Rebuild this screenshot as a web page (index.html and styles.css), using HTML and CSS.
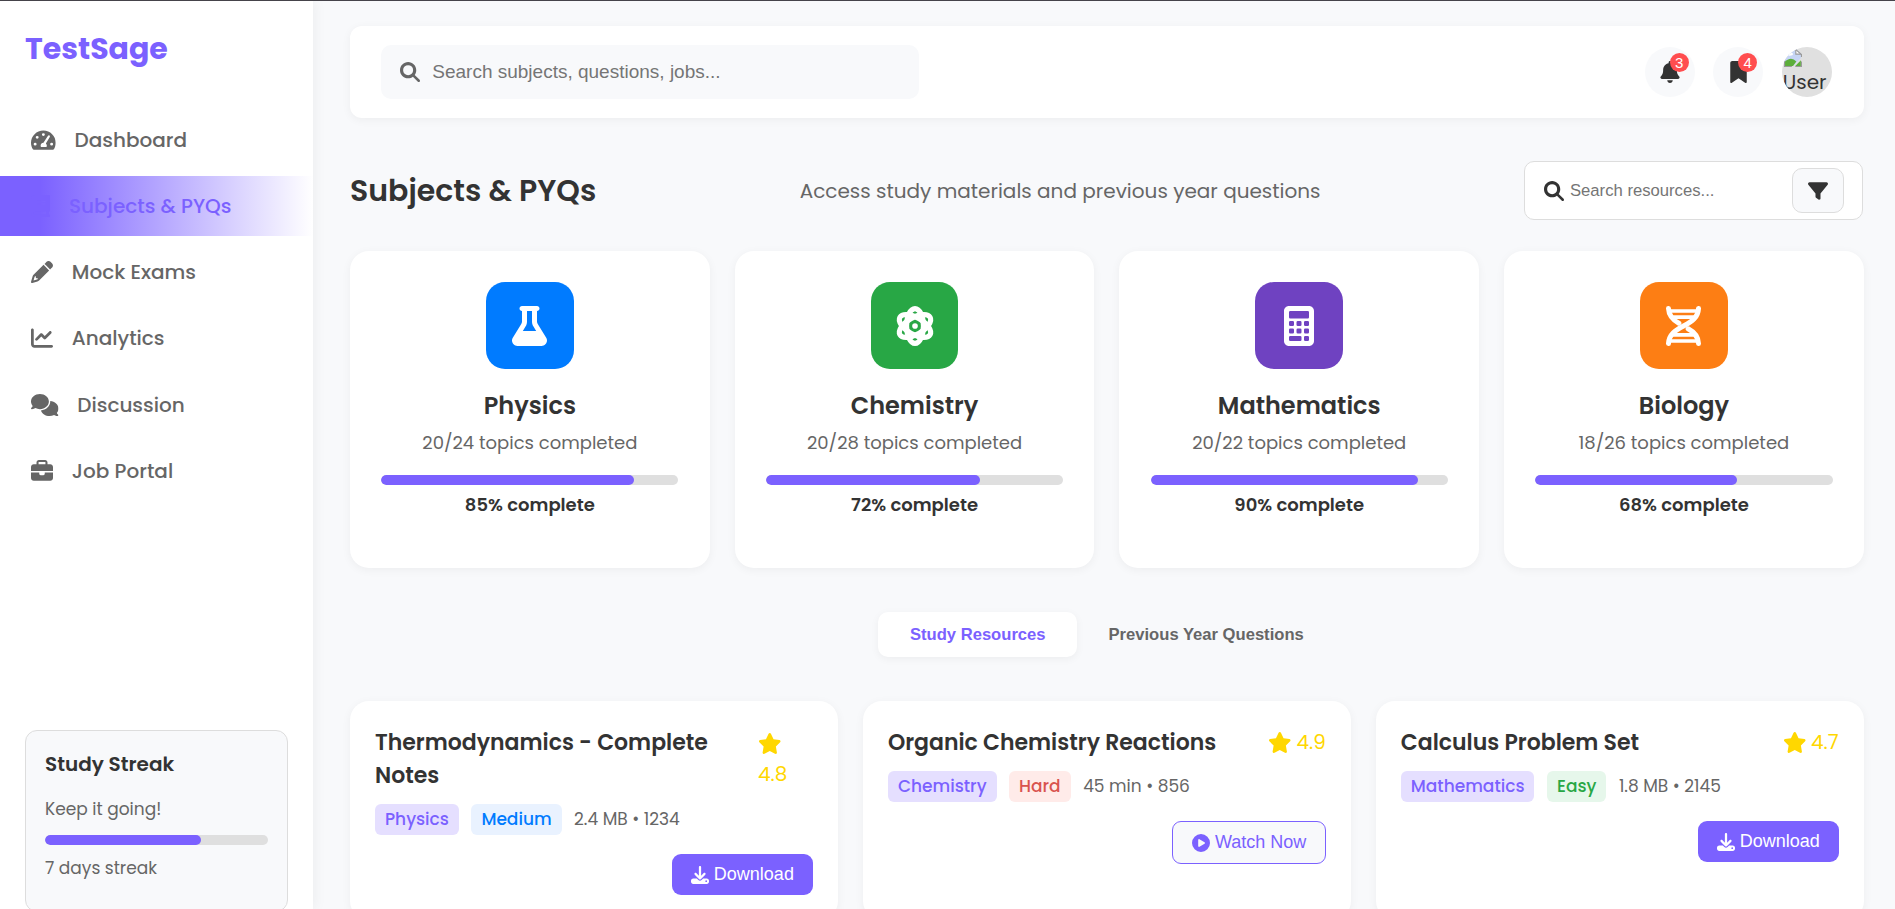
FILE: index.html
```html
<!DOCTYPE html>
<html lang="en">
<head>
<meta charset="utf-8">
<title>TestSage</title>
<link rel="stylesheet" href="styles.css">
</head>
<body>
<svg class="sprite" aria-hidden="true">
  <symbol id="i-search" viewBox="0 0 512 512"><path d="M416 208c0 45.9-14.9 88.3-40 122.7L502.6 457.4c12.5 12.5 12.5 32.8 0 45.3s-32.8 12.5-45.3 0L330.7 376c-34.4 25.2-76.8 40-122.7 40C93.1 416 0 322.9 0 208S93.1 0 208 0S416 93.1 416 208zM208 336a128 128 0 1 0 0-256 128 128 0 1 0 0 256z"/></symbol>
  <symbol id="i-gauge" viewBox="0 0 576 512"><path fill-rule="evenodd" d="M288 32C129 32 0 161 0 320c0 53 14 102 39 145 6 10 16 15 28 15H509c12 0 22-5 28-15 25-43 39-92 39-145C576 161 447 32 288 32zM288 96a34 34 0 1 1 0 68 34 34 0 1 1 0-68zM96 386a34 34 0 1 1 0-68 34 34 0 1 1 0 68zM144 160a34 34 0 1 1 0 68 34 34 0 1 1 0-68zM437 184L346 336c14 13 22 31 22 50 0 12-3 22-8 31H232c-5-9-8-20-8-31 0-36 29-65 66-66L396 159c7-11 22-15 33-8 12 7 15 22 8 33zM480 386a34 34 0 1 1 0-68 34 34 0 1 1 0 68z"/></symbol>
  <symbol id="i-book" viewBox="0 0 448 512"><path fill-rule="evenodd" d="M96 0C43 0 0 43 0 96V416c0 53 43 96 96 96H416c18 0 32-14 32-32s-14-32-32-32V384c18 0 32-14 32-32V32c0-18-14-32-32-32H96zm0 384H352v64H96c-18 0-32-14-32-32s14-32 32-32zM144 128H336v32H144zM144 192H336v32H144z"/></symbol>
  <symbol id="i-pencil" viewBox="0 0 512 512"><path d="M410.3 231l11.3-11.3-33.9-33.9-62.1-62.1L291.7 89.8l-11.3 11.3-22.6 22.6L58.6 322.9c-10.4 10.4-18 23.3-22.2 37.4L1 480.7c-2.5 8.4-.2 17.5 6.1 23.7s15.3 8.5 23.7 6.1l120.3-35.4c14.1-4.2 27-11.8 37.4-22.2L387.7 253.7 410.3 231zM160 399.4l-9.1 22.7c-4 3.1-8.5 5.4-13.3 6.9L59.4 452l23-78.1c1.4-4.9 3.8-9.4 6.9-13.3l22.7-9.1v32c0 8.8 7.2 16 16 16h32zM362.7 18.7L348.3 33.2 325.7 55.8 314.3 67.1l33.9 33.9 62.1 62.1 33.9 33.9 11.3-11.3 22.6-22.6 14.5-14.5c25-25 25-65.5 0-90.5L453.3 18.7c-25-25-65.5-25-90.5 0z"/></symbol>
  <symbol id="i-chart" viewBox="0 0 512 512"><path d="M64 64c0-17.7-14.3-32-32-32S0 46.3 0 64V400c0 44.2 35.8 80 80 80H480c17.7 0 32-14.3 32-32s-14.3-32-32-32H80c-8.8 0-16-7.2-16-16V64zm406.6 86.6c12.5-12.5 12.5-32.8 0-45.3s-32.8-12.5-45.3 0L320 210.7l-57.4-57.4c-12.5-12.5-32.8-12.5-45.3 0l-112 112c-12.5 12.5-12.5 32.8 0 45.3s32.8 12.5 45.3 0L240 221.3l57.4 57.4c12.5 12.5 32.8 12.5 45.3 0l128-128z"/></symbol>
  <symbol id="i-comments" viewBox="0 0 640 512"><path d="M208 352c114.9 0 208-78.8 208-176S322.9 0 208 0S0 78.8 0 176c0 38.6 14.7 74.3 39.6 103.4c-3.5 9.4-8.7 17.7-14.2 24.7c-4.8 6.2-9.7 11-13.3 14.3c-1.8 1.6-3.3 2.9-4.3 3.7c-.5 .4-.9 .7-1.1 .8l-.2 .2C1 327.2-1.4 334.4 .8 340.9S9.1 352 16 352c21.8 0 43.8-5.6 62.1-12.5c9.2-3.5 17.8-7.4 25.3-11.4C134.1 343.3 169.8 352 208 352zM448 176c0 112.3-99.1 196.9-216.5 207C255.8 457.4 336.4 512 432 512c38.2 0 73.9-8.7 104.7-23.9c7.5 4 16 7.9 25.2 11.4c18.3 6.9 40.3 12.5 62.1 12.5c6.9 0 13.1-4.5 15.2-11.1c2.1-6.6-.2-13.8-5.8-17.9l-.2-.2c-.2-.2-.6-.4-1.1-.8c-1-.8-2.5-2-4.3-3.7c-3.6-3.3-8.5-8.1-13.3-14.3c-5.5-7-10.7-15.4-14.2-24.7c24.9-29 39.6-64.7 39.6-103.4c0-92.8-84.9-168.9-192.6-175.5c.4 5.1 .6 10.3 .6 15.5z"/></symbol>
  <symbol id="i-briefcase" viewBox="0 0 512 512"><path d="M184 48H328c4.4 0 8 3.6 8 8V96H176V56c0-4.4 3.6-8 8-8zm-56 8V96H64C28.7 96 0 124.7 0 160v96H192 320 512V160c0-35.3-28.7-64-64-64H384V56c0-30.9-25.1-56-56-56H184c-30.9 0-56 25.1-56 56zM512 288H320v32c0 17.7-14.3 32-32 32H224c-17.7 0-32-14.3-32-32V288H0V416c0 35.3 28.7 64 64 64H448c35.3 0 64-28.7 64-64V288z"/></symbol>
  <symbol id="i-bell" viewBox="0 0 448 512"><path d="M224 0c-17.7 0-32 14.3-32 32V51.2C119 66 64 130.6 64 208v18.8c0 47-17.3 92.4-48.5 127.6l-7.4 8.3c-8.4 9.4-10.4 22.9-5.3 34.4S19.4 416 32 416H416c12.6 0 24-7.4 29.2-18.9s3.1-25-5.3-34.4l-7.4-8.3C401.3 319.2 384 273.9 384 226.8V208c0-77.4-55-142-128-156.8V32c0-17.7-14.3-32-32-32zm45.3 493.3c12-12 18.7-28.3 18.7-45.3H224 160c0 17 6.7 33.3 18.7 45.3s28.3 18.7 45.3 18.7s33.3-6.7 45.3-18.7z"/></symbol>
  <symbol id="i-bookmark" viewBox="0 0 384 512"><path d="M0 48V487.7C0 501.1 10.9 512 24.3 512c5 0 9.9-1.5 14-4.4L192 400 345.7 507.6c4.1 2.9 9 4.4 14 4.4c13.4 0 24.3-10.9 24.3-24.3V48c0-26.5-21.5-48-48-48H48C21.5 0 0 21.5 0 48z"/></symbol>
  <symbol id="i-filter" viewBox="0 0 512 512"><path d="M3.9 54.9C10.5 40.9 24.5 32 40 32H472c15.5 0 29.5 8.9 36.1 22.9s4.6 30.5-5.2 42.5L320 320.9V448c0 12.1-6.8 23.2-17.7 28.6s-23.8 4.3-33.5-3l-64-48c-8.1-6-12.8-15.5-12.8-25.6V320.9L9 97.3C-.7 85.4-2.8 68.8 3.9 54.9z"/></symbol>
  <symbol id="i-flask" viewBox="0 0 448 512"><path d="M288 0H160 128C110.3 0 96 14.3 96 32s14.3 32 32 32V196.8c0 11.8-3.3 23.5-9.5 33.5L10.3 406.2C3.6 417.2 0 429.7 0 442.6C0 480.9 31.1 512 69.4 512H378.6c38.3 0 69.4-31.1 69.4-69.4c0-12.8-3.6-25.4-10.3-36.4L329.5 230.4c-6.2-10.1-9.5-21.7-9.5-33.5V64c17.7 0 32-14.3 32-32s-14.3-32-32-32H288zM192 196.8V64h64V196.8c0 23.7 6.6 46.9 19 67.1L309.5 320h-171L173 263.9c12.4-20.2 19-43.4 19-67.1z"/></symbol>
  <symbol id="i-atom" viewBox="0 0 512 512"><g fill="none" stroke="currentColor" stroke-width="66"><ellipse cx="256" cy="256" rx="108" ry="223"/><ellipse cx="256" cy="256" rx="108" ry="223" transform="rotate(60 256 256)"/><ellipse cx="256" cy="256" rx="108" ry="223" transform="rotate(-60 256 256)"/></g><circle cx="256" cy="256" r="36"/></symbol>
  <symbol id="i-calc" viewBox="0 0 384 512"><path fill-rule="evenodd" d="M64 0C28.7 0 0 28.7 0 64V448c0 35.3 28.7 64 64 64H320c35.3 0 64-28.7 64-64V64c0-35.3-28.7-64-64-64zM80 64H304q16 0 16 16V144q0 16-16 16H80q-16 0-16-16V80q0-16 16-16zM80 192h32q16 0 16 16v32q0 16-16 16H80q-16 0-16-16v-32q0-16 16-16zM176 192h32q16 0 16 16v32q0 16-16 16h-32q-16 0-16-16v-32q0-16 16-16zM272 192h32q16 0 16 16v32q0 16-16 16h-32q-16 0-16-16v-32q0-16 16-16zM80 288h32q16 0 16 16v32q0 16-16 16H80q-16 0-16-16v-32q0-16 16-16zM176 288h32q16 0 16 16v32q0 16-16 16h-32q-16 0-16-16v-32q0-16 16-16zM272 288h32q16 0 16 16v32q0 16-16 16h-32q-16 0-16-16v-32q0-16 16-16zM80 384H208q16 0 16 16v32q0 16-16 16H80q-16 0-16-16v-32q0-16 16-16zM272 384h32q16 0 16 16v32q0 16-16 16h-32q-16 0-16-16v-32q0-16 16-16z"/></symbol>
  <symbol id="i-dna" viewBox="0 0 448 512"><g fill="none" stroke="currentColor" stroke-width="64" stroke-linecap="round"><path d="M416 32C410 150 330 200 224 256S38 362 32 480"/><path d="M32 32C36 120 90 180 165 220"/><path d="M416 480C412 392 358 332 283 292"/></g><g fill="none" stroke="currentColor" stroke-width="46"><path d="M50 64H398M90 142H358M90 370H358M50 448H398"/></g></symbol>
  <symbol id="i-star" viewBox="0 0 576 512"><path d="M316.9 18C311.6 7 300.4 0 288.1 0s-23.4 7-28.8 18L195 150.3 51.4 171.5c-12 1.8-22 10.2-25.7 21.7s-.7 24.2 7.9 32.7L137.8 329 113.2 474.7c-2 12 3 24.2 12.9 31.3s23 8 33.8 2.3l128.3-68.5 128.3 68.5c10.8 5.7 23.9 4.9 33.8-2.3s14.9-19.3 12.9-31.3L438.5 329 542.7 225.9c8.6-8.5 11.7-21.2 7.9-32.7s-13.7-19.9-25.7-21.7L381.2 150.3 316.9 18z"/></symbol>
  <symbol id="i-download" viewBox="0 0 512 512"><path d="M288 32c0-17.7-14.3-32-32-32s-32 14.3-32 32V274.7l-73.4-73.4c-12.5-12.5-32.8-12.5-45.3 0s-12.5 32.8 0 45.3l128 128c12.5 12.5 32.8 12.5 45.3 0l128-128c12.5-12.5 12.5-32.8 0-45.3s-32.8-12.5-45.3 0L288 274.7V32zM64 352c-35.3 0-64 28.7-64 64v32c0 35.3 28.7 64 64 64H448c35.3 0 64-28.7 64-64V416c0-35.3-28.7-64-64-64H346.5l-45.3 45.3c-25 25-65.5 25-90.5 0L165.5 352H64zm368 56a24 24 0 1 1 0 48 24 24 0 1 1 0-48z"/></symbol>
  <symbol id="i-play" viewBox="0 0 512 512"><path fill-rule="evenodd" d="M0 256a256 256 0 1 1 512 0 256 256 0 1 1-512 0zM188 147c-7 4-12 12-12 21V344c0 9 5 17 12 21s17 4 24 0l144-88c7-4 12-12 12-21s-4-16-12-21L212 147c-7-4-16-5-24 0z"/></symbol>
</svg>
<div class="app">
  <aside class="sidebar">
    <div class="logo">TestSage</div>
    <nav class="nav">
      <a class="nav-item"><svg class="ic w25"><use href="#i-gauge"/></svg><span>Dashboard</span></a>
      <a class="nav-item active"><svg class="ic w19"><use href="#i-book"/></svg><span>Subjects &amp; PYQs</span></a>
      <a class="nav-item"><svg class="ic"><use href="#i-pencil"/></svg><span>Mock Exams</span></a>
      <a class="nav-item"><svg class="ic"><use href="#i-chart"/></svg><span>Analytics</span></a>
      <a class="nav-item"><svg class="ic w28"><use href="#i-comments"/></svg><span>Discussion</span></a>
      <a class="nav-item"><svg class="ic"><use href="#i-briefcase"/></svg><span>Job Portal</span></a>
    </nav>
    <div class="streak">
      <h3>Study Streak</h3>
      <p>Keep it going!</p>
      <div class="bar"><div class="fill" style="width:70%"></div></div>
      <p class="days">7 days streak</p>
    </div>
  </aside>
  <main class="main">
    <header class="topbar">
      <label class="search"><svg class="ic20"><use href="#i-search"/></svg><span>Search subjects, questions, jobs...</span></label>
      <div class="actions">
        <button class="round"><svg class="bell"><use href="#i-bell"/></svg><b class="badge">3</b></button>
        <button class="round"><svg class="mark"><use href="#i-bookmark"/></svg><b class="badge">4</b></button>
        <div class="avatar">
          <svg class="broken" viewBox="0 0 16 16"><path d="M0 0H11L15 4V8L8 15H0z" fill="#c6d5f5"/><path d="M0 15V12Q6 6 11 11L8 15z" fill="#5cae3a"/><path d="M15 10V15H10z" fill="#5cae3a"/><ellipse cx="5" cy="4.5" rx="3" ry="1.5" fill="#fff"/><path d="M10.5 0V4.5H15" fill="#fff" stroke="#9a9a9a"/><path d="M.5 15V.5H10.5L15.5 5V7M0 15.5H7M10 15.5H15.500V11" fill="none" stroke="#9a9a9a"/></svg>
          <span>User</span>
        </div>
      </div>
    </header>
    <section class="page-head">
      <h1>Subjects &amp; PYQs</h1>
      <p class="subtitle">Access study materials and previous year questions</p>
      <div class="res-search"><svg class="ic20"><use href="#i-search"/></svg><span>Search resources...</span><button class="filter"><svg class="ic20"><use href="#i-filter"/></svg></button></div>
    </section>
    <section class="subjects">
      <article class="subject"><div class="tile blue"><svg class="w35"><use href="#i-flask"/></svg></div><h3>Physics</h3><p>20/24 topics completed</p><div class="bar"><div class="fill" style="width:85%"></div></div><span class="pct">85% complete</span></article>
      <article class="subject"><div class="tile green"><svg class="w40"><use href="#i-atom"/></svg></div><h3>Chemistry</h3><p>20/28 topics completed</p><div class="bar"><div class="fill" style="width:72%"></div></div><span class="pct">72% complete</span></article>
      <article class="subject"><div class="tile purple"><svg class="w30"><use href="#i-calc"/></svg></div><h3>Mathematics</h3><p>20/22 topics completed</p><div class="bar"><div class="fill" style="width:90%"></div></div><span class="pct">90% complete</span></article>
      <article class="subject"><div class="tile orange"><svg class="w35"><use href="#i-dna"/></svg></div><h3>Biology</h3><p>18/26 topics completed</p><div class="bar"><div class="fill" style="width:68%"></div></div><span class="pct">68% complete</span></article>
    </section>
    <div class="tabs"><button class="tab on">Study Resources</button><button class="tab">Previous Year Questions</button></div>
    <section class="resources">
      <article class="res">
        <div class="res-head"><h3>Thermodynamics - Complete Notes</h3><div class="rating stacked"><svg><use href="#i-star"/></svg><span>4.8</span></div></div>
        <div class="meta"><span class="tag subj">Physics</span><span class="tag medium">Medium</span><span class="info">2.4 MB • 1234</span></div>
        <div class="foot"><button class="btn"><svg><use href="#i-download"/></svg><span>Download</span></button></div>
      </article>
      <article class="res">
        <div class="res-head"><h3>Organic Chemistry Reactions</h3><div class="rating"><svg><use href="#i-star"/></svg><span>4.9</span></div></div>
        <div class="meta"><span class="tag subj">Chemistry</span><span class="tag hard">Hard</span><span class="info">45 min • 856</span></div>
        <div class="foot"><button class="btn ghost"><svg><use href="#i-play"/></svg><span>Watch Now</span></button></div>
      </article>
      <article class="res">
        <div class="res-head"><h3>Calculus Problem Set</h3><div class="rating"><svg><use href="#i-star"/></svg><span>4.7</span></div></div>
        <div class="meta"><span class="tag subj">Mathematics</span><span class="tag easy">Easy</span><span class="info">1.8 MB • 2145</span></div>
        <div class="foot"><button class="btn"><svg><use href="#i-download"/></svg><span>Download</span></button></div>
      </article>
    </section>
  </main>
</div>
</body>
</html>
```
FILE: styles.css
```css
* { box-sizing: border-box; margin: 0; padding: 0; }
body { font-family: Poppins, Inter, "Open Sans", sans-serif; font-size: 20px; color: #333; background: #f8f9fb; height: 909px; overflow: hidden; }
button { font-family: "Liberation Sans", Arial, sans-serif; border: 0; background: none; }
svg { fill: currentColor; display: block; flex: none; }
.sprite { position: absolute; width: 0; height: 0; }
.app { display: flex; height: 909px; border-top: 1px solid #45434a; overflow: hidden; }

.sidebar { width: 312.5px; flex: none; background: #fff; box-shadow: 2px 0 12px rgba(0,0,0,.05); display: flex; flex-direction: column; z-index: 1; }
.logo { padding: 24px 25px 0; font-size: 30px; line-height: 48px; font-weight: 700; color: #7b61ff; }
.nav { display: flex; flex-direction: column; gap: 6.25px; margin-top: 36.6px; }
.nav-item { display: flex; align-items: center; gap: 18.75px; height: 60px; padding-left: 31px; font-weight: 500; color: #666; white-space: nowrap; }
.nav-item.active { color: #7b61ff; background: linear-gradient(90deg, #7b61ff 40px, #fff 100%); }
.ic { width: 22px; height: 22px; }
.w25 { width: 24.75px; } .w19 { width: 19.25px; } .w28 { width: 27.5px; }
.streak { margin: 229.4px 25px 0; height: 182px; flex: none; border: 1px solid #ddd; border-radius: 12px; background: #f8f9fb; padding: 18px 19px; }
.streak h3 { font-size: 20px; line-height: 30px; font-weight: 600; }
.streak p { font-size: 17px; line-height: 26px; color: #666; margin-top: 17px; }
.bar { height: 10px; border-radius: 5px; background: #dfdfdf; overflow: hidden; }
.fill { height: 10px; border-radius: 5px; background: #7b61ff; }
.streak .bar { margin-top: 13px; }
.streak .days { margin-top: 10px; }

.main { flex: 1; padding: 25px 31.25px 0 37.5px; min-width: 0; }
.topbar { height: 92px; border-radius: 12px; background: #fff; box-shadow: 0 2px 10px rgba(0,0,0,.05); display: flex; align-items: center; justify-content: space-between; padding: 0 32px 0 31px; }
.search { width: 537.5px; height: 54px; border-radius: 10px; background: #f8f9fb; display: flex; align-items: center; gap: 12.5px; padding-left: 18.75px; color: #666; font-family: "Liberation Sans", Arial, sans-serif; font-size: 19px; }
.search span, .res-search span { color: #757575; }
.ic20 { width: 20px; height: 20px; }
.actions { display: flex; gap: 18.5px; }
.round, .avatar { width: 50px; height: 50px; border-radius: 50%; }
.round { background: #f8f9fb; display: flex; align-items: center; justify-content: center; position: relative; color: #333; }
.bell { width: 20px; height: 22px; } .mark { width: 17px; height: 22px; }
.badge { position: absolute; left: 25px; top: 6px; width: 19px; height: 19px; border-radius: 50%; background: #ff4d4f; color: #fff; font-size: 15px; line-height: 19px; font-weight: 400; text-align: center; }
.avatar { background: #e0e0e0; overflow: hidden; padding: 2px 0 0 1px; line-height: 30px; }
.broken { width: 20px; height: 18px; }
.avatar span { display: block; }

.page-head { display: flex; justify-content: space-between; align-items: center; margin-top: 43px; height: 59px; }
h1 { font-size: 30px; font-weight: 600; }
.subtitle { color: #666; }
.res-search { width: 339px; height: 59px; margin-right: .75px; border: 1px solid #ddd; border-radius: 10px; background: #fff; display: flex; align-items: center; gap: 6.25px; padding: 0 18px 0 18.75px; font-family: "Liberation Sans", Arial, sans-serif; font-size: 16.667px; }
.filter { width: 52px; height: 45px; margin-left: auto; border: 1px solid #ddd; border-radius: 10px; background: #f8f9fb; display: flex; align-items: center; justify-content: center; color: #333; }

.subjects { display: grid; grid-template-columns: repeat(4, 1fr); gap: 25px; margin-top: 31px; }
.subject { height: 317px; border-radius: 19px; background: #fff; box-shadow: 0 2px 10px rgba(0,0,0,.05); padding: 31.25px; display: flex; flex-direction: column; align-items: center; }
.tile { width: 87.5px; height: 87px; border-radius: 19px; display: flex; align-items: center; justify-content: center; color: #fff; }
.tile svg { height: 40px; }
.w35 { width: 35px; } .w40 { width: 40px; } .w30 { width: 30px; }
.blue { background: #007bff; } .green { background: #28a745; } .purple { background: #6f42c1; } .orange { background: #fd7e14; }
.subject h3 { font-size: 24px; line-height: 38px; font-weight: 600; margin-top: 18px; }
.subject p { font-size: 18px; line-height: 30px; color: #666; margin-top: 3px; }
.subject .bar { width: 100%; margin-top: 17px; }
.pct { font-size: 18px; line-height: 28px; font-weight: 600; margin-top: 6px; }

.tabs { display: flex; justify-content: center; margin-top: 44px; }
.tab { height: 45px; padding: 0 31.5px; font-size: 16.6px; font-weight: 700; color: #666; border-radius: 10px; }
.tab.on { color: #7b61ff; background: #fff; box-shadow: 0 2px 8px rgba(0,0,0,.05); }

.resources { display: grid; grid-template-columns: repeat(3, 1fr); gap: 25px; margin-top: 44px; }
.res { height: 219px; border-radius: 19px; background: #fff; box-shadow: 0 2px 10px rgba(0,0,0,.05); padding: 25px; }
.res-head { display: flex; justify-content: space-between; align-items: flex-start; }
.res h3 { font-size: 22px; line-height: 33px; font-weight: 600; max-width: 345px; }
.rating { display: flex; gap: 5px; align-items: center; color: #ffd700; line-height: 33px; }
.rating svg { width: 23.5px; height: 21px; }
.rating.stacked { display: block; width: 55px; margin-top: 7px; }
.rating.stacked span { display: block; line-height: 30px; margin-top: 5px; }
.meta { display: flex; gap: 12.5px; margin-top: 12px; height: 31px; font-size: 17px; line-height: 31px; }
.tag { padding: 0 10px; border-radius: 6px; font-weight: 500; }
.subj { background: #e5dfff; color: #7b61ff; } .medium { background: #e9f2ff; color: #007bff; } .hard { background: #ffebe9; color: #d9534f; } .easy { background: #e6f7eb; color: #28a745; }
.info { color: #666; }
.foot { display: flex; justify-content: flex-end; margin-top: 19px; }
.btn { height: 41px; display: flex; align-items: center; gap: 5px; padding: 0 19px; border-radius: 9px; background: #7b61ff; color: #fff; font-size: 18px; }
.btn svg { width: 18px; height: 18px; }
.btn.ghost { height: 43px; padding: 0 18.5px; background: #f8f9fb; border: 1px solid #7b61ff; color: #7b61ff; }
```
